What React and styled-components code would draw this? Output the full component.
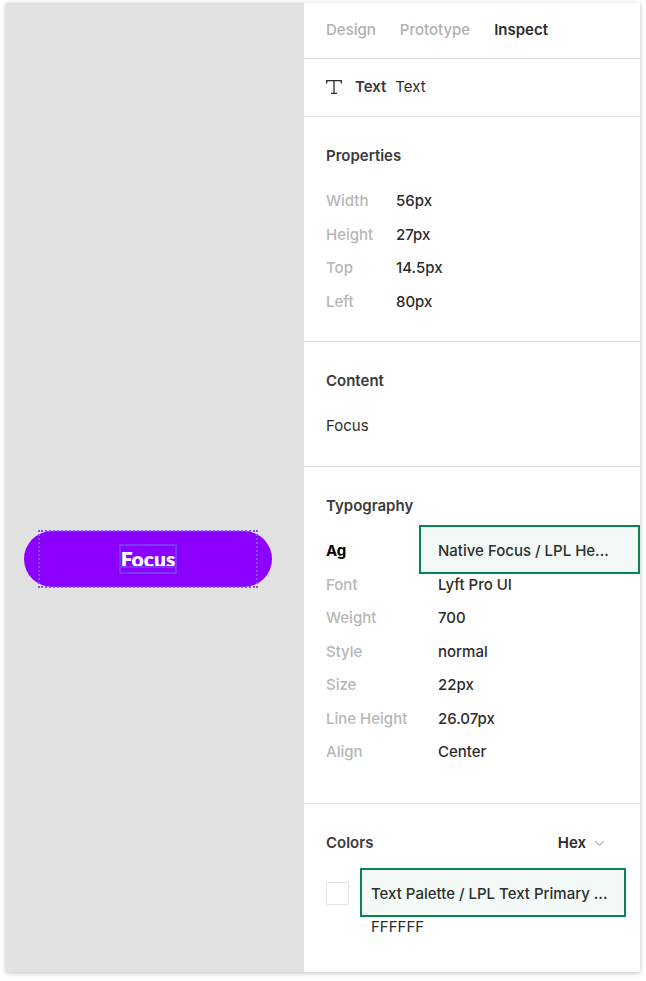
import { useState } from "react"
import styled, { createGlobalStyle } from "styled-components"

const GlobalStyle = createGlobalStyle`
    * {
        box-sizing: border-box;
    }
    body {
        margin: 0;
        background: #fff;
        font-family: Inter, "Liberation Sans", sans-serif;
        font-size: 15px;
        line-height: 20px;
        color: #2c2c2c;
    }
    h2, p, dl, dd {
        margin: 0;
    }
    button, select {
        margin: 0;
        padding: 0;
        border: none;
        background: none;
        font: inherit;
        color: inherit;
        cursor: pointer;
    }
`

const Page = styled.main`
    display: flex;
    min-height: 100vh;
    padding: 3px 6px 9px;
`

const Frame = styled.div`
    display: flex;
    flex: 1;
    box-shadow: 0 1px 5px rgba(0, 0, 0, 0.25);
`

const Canvas = styled.section`
    position: relative;
    flex: 1;
    background: #e1e1e1;
`

const Pill = styled.button`
    position: absolute;
    top: 528px;
    left: 18px;
    display: flex;
    align-items: center;
    justify-content: center;
    width: 248px;
    height: 56px;
    border-radius: 28px;
    background: #8c00ff;
    color: #fff;
`

const Bounds = styled.span`
    position: absolute;
    inset: -1px 14px;
    border: 2px dotted #8150fa;
`

const PillText = styled.span`
    position: relative;
    display: block;
    padding: 0 2px;
    font-family: Lato, sans-serif;
    font-size: 21px;
    font-weight: 800;
    line-height: 30px;

    /* selection outline */
    &::before {
        content: "";
        position: absolute;
        inset: 0;
        border: 2px solid #7b36ff;
    }
    /* baseline */
    &::after {
        content: "";
        position: absolute;
        left: 2px;
        right: 2px;
        bottom: 6px;
        height: 2px;
        background: #7b36ff;
    }
`

const Panel = styled.aside`
    width: 336px;
    background: #fff;
`

const Tabs = styled.nav`
    display: flex;
    gap: 24px;
    padding: 17px 22px 18px;
    border-bottom: 1px solid #e1e1e1;
`

const Tab = styled.button`
    font-weight: ${(props) => (props.$active ? 600 : 500)};
    color: ${(props) => (props.$active ? "#2c2c2c" : "#b0b0b0")};
`

const Layer = styled.div`
    display: flex;
    align-items: center;
    gap: 9px;
    padding: 18px 22px 19px;
    border-bottom: 1px solid #e1e1e1;

    svg {
        margin-right: 4px;
    }
`

const Section = styled.section`
    padding: 29px 22px ${(props) => props.$bottom || 30}px;
    border-bottom: ${(props) => (props.$last ? "none" : "1px solid #e1e1e1")};
`

const Title = styled.h2`
    font-size: 15px;
    font-weight: 600;
    line-height: 20px;
    color: #3a3a3a;
`

const Content = styled.p`
    margin-top: 25px;
`

const List = styled.dl`
    display: flex;
    flex-direction: column;
    justify-content: space-between;
    min-height: ${(props) => props.$height}px;
    margin-top: 25px;
`

const Row = styled.div`
    display: grid;
    grid-template-columns: ${(props) => props.$label}px 1fr;
`

const Label = styled.dt`
    font-weight: 500;
    color: #b6b6b6;
`

const Value = styled.dd`
    font-weight: 500;
`

const Sample = styled.dt`
    font-weight: 700;
    color: #000;
`

const StyleName = styled.dd`
    position: relative;
    font-weight: 500;
    white-space: nowrap;

    &::after {
        content: "";
        position: absolute;
        inset: -16px -22px -13px -19px;
        border: 2px solid #078550;
        background: rgba(7, 133, 80, 0.05);
    }
`

const ColorsHead = styled.div`
    display: flex;
    align-items: center;
    justify-content: space-between;
    padding-right: 13px;
`

const Picker = styled.label`
    display: flex;
    align-items: center;
    gap: 8px;
    font-weight: 600;

    select {
        appearance: none;
        field-sizing: content;
        outline: none;
    }
`

const ColorRow = styled.div`
    display: grid;
    grid-template-columns: 23px 1fr;
    column-gap: 22px;
    row-gap: 12px;
    align-items: center;
    margin-top: 29px;
`

const Swatch = styled.span`
    width: 23px;
    height: 23px;
    border: 1px solid #e4e4e4;
    border-radius: 1px;
    background: #fff;
`

const ColorName = styled.span`
    position: relative;
    font-weight: 500;
    white-space: nowrap;

    &::after {
        content: "";
        position: absolute;
        inset: -16px -8px -13px -11px;
        border: 2px solid #078550;
        background: rgba(7, 133, 80, 0.05);
    }
`

const ColorValue = styled.span`
    grid-column: 2;
`

const tabs = ["Design", "Prototype", "Inspect"]

const properties = [
    ["Width", "56px"],
    ["Height", "27px"],
    ["Top", "14.5px"],
    ["Left", "80px"],
]

const typography = [
    ["Font", "Lyft Pro UI"],
    ["Weight", "700"],
    ["Style", "normal"],
    ["Size", "22px"],
    ["Line Height", "26.07px"],
    ["Align", "Center"],
]

const TextIcon = () => (
    <svg width="16" height="16" viewBox="0 0 16 16" fill="none" stroke="#2c2c2c" aria-hidden="true">
        <path d="M0.7 4.4V1.6H15.3V4.4M8 1.6V14.4M5 14.4H11" strokeWidth="1.3" />
    </svg>
)

const Chevron = () => (
    <svg width="11" height="12" viewBox="0 0 11 12" fill="none" stroke="#b0b0b0" aria-hidden="true">
        <path d="M1.2 4.2L5.5 8.5L9.8 4.2" strokeWidth="1.2" />
    </svg>
)

const App = () => {
    const [active, setActive] = useState("Inspect")
    const [format, setFormat] = useState("Hex")

    return (
        <Page>
            <GlobalStyle />
            <Frame>
                <Canvas>
                    <Pill type="button">
                        <Bounds />
                        <PillText>Focus</PillText>
                    </Pill>
                </Canvas>
                <Panel>
                    <Tabs>
                        {tabs.map((tab) => (
                            <Tab key={tab} type="button" $active={tab === active} onClick={() => setActive(tab)}>
                                {tab}
                            </Tab>
                        ))}
                    </Tabs>
                    <Layer>
                        <TextIcon />
                        <Title as="strong">Text</Title>
                        <span>Text</span>
                    </Layer>
                    <Section $bottom={29}>
                        <Title>Properties</Title>
                        <List $height={121}>
                            {properties.map(([label, value]) => (
                                <Row key={label} $label={70}>
                                    <Label>{label}</Label>
                                    <Value>{value}</Value>
                                </Row>
                            ))}
                        </List>
                    </Section>
                    <Section>
                        <Title>Content</Title>
                        <Content>Focus</Content>
                    </Section>
                    <Section $bottom={41}>
                        <Title>Typography</Title>
                        <List $height={221}>
                            <Row $label={112}>
                                <Sample>Ag</Sample>
                                <StyleName>Native Focus / LPL He...</StyleName>
                            </Row>
                            {typography.map(([label, value]) => (
                                <Row key={label} $label={112}>
                                    <Label>{label}</Label>
                                    <Value>{value}</Value>
                                </Row>
                            ))}
                        </List>
                    </Section>
                    <Section $last>
                        <ColorsHead>
                            <Title>Colors</Title>
                            <Picker>
                                <select aria-label="Color format" value={format} onChange={(e) => setFormat(e.target.value)}>
                                    <option>Hex</option>
                                    <option>RGB</option>
                                    <option>HSL</option>
                                </select>
                                <Chevron />
                            </Picker>
                        </ColorsHead>
                        <ColorRow>
                            <Swatch />
                            <ColorName>Text Palette / LPL Text Primary ...</ColorName>
                            <ColorValue>FFFFFF</ColorValue>
                        </ColorRow>
                    </Section>
                </Panel>
            </Frame>
        </Page>
    )
}

export default App
